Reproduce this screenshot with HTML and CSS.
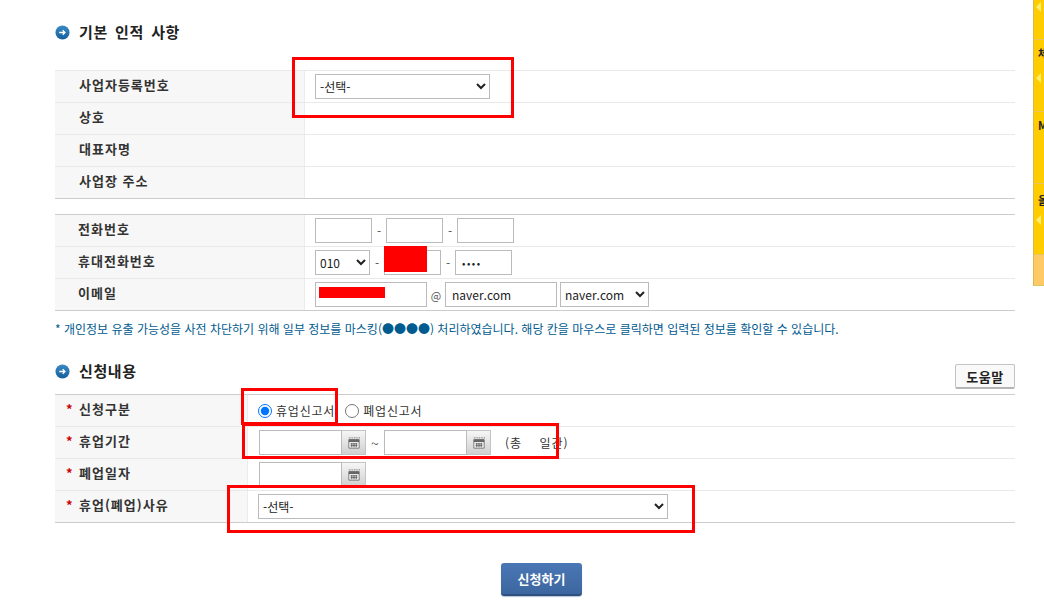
FILE: index.html
```html
<!DOCTYPE html>
<html lang="ko">
<head>
<meta charset="utf-8">
<title>휴폐업 신고</title>
<link rel="stylesheet" href="styles.css">
</head>
<body>
<main class="page">
  <h2 class="heading first">
    <svg class="bullet" viewBox="0 0 16 16"><defs><linearGradient id="b" x1="0" y1="0" x2="0" y2="1"><stop offset="0" stop-color="#3a8ac4"/><stop offset="1" stop-color="#15609c"/></linearGradient></defs><circle cx="8" cy="8" r="7.5" fill="url(#b)"/><path d="M4.5 8h6M8.2 5.6 10.6 8 8.2 10.4" fill="none" stroke="#fff" stroke-width="1.4"/></svg>
    기본 인적 사항
  </h2>

  <section class="table light-top wide">
    <div class="row"><div class="th">사업자등록번호</div><div class="td"><select class="sel sel-biz"><option>-선택-</option></select></div></div>
    <div class="row"><div class="th">상호</div><div class="td"></div></div>
    <div class="row"><div class="th">대표자명</div><div class="td"></div></div>
    <div class="row"><div class="th">사업장 주소</div><div class="td"></div></div>
  </section>

  <section class="table wide second">
    <div class="row"><div class="th">전화번호</div><div class="td">
      <input class="inp w57" type="text"><span class="dash">-</span><input class="inp w57" type="text"><span class="dash">-</span><input class="inp w57" type="text">
    </div></div>
    <div class="row"><div class="th">휴대전화번호</div><div class="td">
      <select class="sel w55"><option>010</option></select><span class="dash">-</span><input class="inp w57" type="text"><span class="dash">-</span><input class="inp w57 masked" type="password" value="1234">
    </div></div>
    <div class="row"><div class="th">이메일</div><div class="td">
      <input class="inp w112" type="text"><span class="at">@</span><input class="inp w112" type="text" value="naver.com"><select class="sel w89 ml3"><option>naver.com</option></select>
    </div></div>
  </section>

  <p class="notice">* 개인정보 유출 가능성을 사전 차단하기 위해 일부 정보를 마스킹(●●●●) 처리하였습니다. 해당 칸을 마우스로 클릭하면 입력된 정보를 확인할 수 있습니다.</p>

  <div class="head-row">
    <h2 class="heading">
      <svg class="bullet" viewBox="0 0 16 16"><circle cx="8" cy="8" r="7.5" fill="url(#b)"/><path d="M4.5 8h6M8.2 5.6 10.6 8 8.2 10.4" fill="none" stroke="#fff" stroke-width="1.4"/></svg>
      신청내용
    </h2>
    <button class="help" type="button">도움말</button>
  </div>

  <section class="table narrow">
    <div class="row"><div class="th"><span class="star">*</span>신청구분</div><div class="td radios">
      <label class="radio"><input type="radio" name="kind" checked>휴업신고서</label>
      <label class="radio"><input type="radio" name="kind">폐업신고서</label>
    </div></div>
    <div class="row"><div class="th"><span class="star">*</span>휴업기간</div><div class="td dates">
      <input class="inp date" type="text"><button class="cal" type="button"><svg viewBox="0 0 14 14"><path d="M1 1h1M3 1h1M5 1h1M7 1h1M9 1h1M11 1h1M13 1h1" stroke="#555" stroke-width="1"/><path d="M1 3h12v10H1z" fill="#fff" stroke="#666"/><path d="M1 3h12v3H1z" fill="#666"/><path d="M3 8h8M3 10h8M4 7v5M6 7v5M8 7v5M10 7v5" stroke="#666" stroke-width="1"/></svg></button>
      <span class="tilde">~</span>
      <input class="inp date" type="text"><button class="cal" type="button"><svg viewBox="0 0 14 14"><path d="M1 1h1M3 1h1M5 1h1M7 1h1M9 1h1M11 1h1M13 1h1" stroke="#555" stroke-width="1"/><path d="M1 3h12v10H1z" fill="#fff" stroke="#666"/><path d="M1 3h12v3H1z" fill="#666"/><path d="M3 8h8M3 10h8M4 7v5M6 7v5M8 7v5M10 7v5" stroke="#666" stroke-width="1"/></svg></button>
      <span class="total">(총&nbsp;&nbsp;&nbsp;&nbsp;일간)</span>
    </div></div>
    <div class="row"><div class="th"><span class="star">*</span>폐업일자</div><div class="td dates">
      <input class="inp date" type="text"><button class="cal" type="button"><svg viewBox="0 0 14 14"><path d="M1 1h1M3 1h1M5 1h1M7 1h1M9 1h1M11 1h1M13 1h1" stroke="#555" stroke-width="1"/><path d="M1 3h12v10H1z" fill="#fff" stroke="#666"/><path d="M1 3h12v3H1z" fill="#666"/><path d="M3 8h8M3 10h8M4 7v5M6 7v5M8 7v5M10 7v5" stroke="#666" stroke-width="1"/></svg></button>
    </div></div>
    <div class="row"><div class="th"><span class="star">*</span>휴업(폐업)사유</div><div class="td reason">
      <select class="sel sel-reason"><option>-선택-</option></select>
    </div></div>
  </section>

  <div class="actions"><button class="submit" type="button">신청하기</button></div>
</main>

<aside class="side">
  <div class="tab tab1"><i class="arrow"></i></div>
  <div class="tab tab2"><span>체</span><i class="arrow"></i></div>
  <div class="tab tab3"><span>M</span></div>
  <div class="tab tab4"><span>올</span><i class="arrow"></i></div>
  <div class="tab-end"></div>
</aside>

<div class="mark box1"></div>
<div class="mark box2"></div>
<div class="mark box3"></div>
<div class="mark box4"></div>
<div class="fill fill1"></div>
<div class="fill fill2"></div>
</body>
</html>
```
FILE: styles.css
```css
* { box-sizing: border-box; }
html, body { margin: 0; padding: 0; height: 610px; overflow: hidden; background: #fff; }
body { position: relative; font-family: "Noto Sans CJK KR", "Noto Sans", sans-serif; font-size: 12px; color: #333; }
.page { width: 960px; margin-left: 55px; padding-top: 20px; }

.heading { display: flex; align-items: center; gap: 9px; margin: 0; height: 24px; padding-bottom: 2px; font-size: 15px; font-weight: 700; color: #222; letter-spacing: 0.6px; }
.heading.first { margin-bottom: 26px; word-spacing: 2.5px; }
.bullet { width: 15px; height: 15px; flex: none; margin-top: 2px; }

.table { border-top: 1px solid #ccc; border-bottom: 0; }
.table.light-top { border-top-color: #e9e9e9; }
.table.second { margin-top: 15px; }
.row { display: flex; height: 32px; border-bottom: 1px solid #e9e9e9; }
.row:last-child { border-bottom-color: #ccc; }
.th { flex: none; display: flex; align-items: center; background: #f7f7f7; border-right: 1px solid #ececec; font-size: 13px; font-weight: 700; letter-spacing: 1px; color: #333; white-space: nowrap; }
.wide .th { width: 250px; padding-left: 24px; padding-bottom: 4px; }
.narrow .th { width: 193px; padding-left: 11px; padding-bottom: 4px; }
.second .th { padding-left: 23px; }
.td { flex: 1; display: flex; align-items: center; padding-left: 10px; min-width: 0; }
.star { width: 13px; color: #c00; font-weight: 700; }

.inp, .sel { height: 25px; border: 1px solid #bbb; border-radius: 0; background: #fff; font-family: inherit; font-size: 12px; color: #222; margin: 0; }
.inp { padding: 0 6px; }
.sel { padding: 0; }
.sel-biz { width: 175px; }
.sel-reason { width: 410px; }
.w57 { width: 57px; }
.w55 { width: 55px; }
.w112 { width: 112px; }
.w89 { width: 89px; }
.ml3 { margin-left: 3px; }
.masked { font-size: 10px; letter-spacing: 1.5px; }
.dash { width: 14px; text-align: center; color: #555; }
.at { width: 18px; text-align: center; font-size: 11px; color: #555; }

.notice { margin: 10px 0 0; height: 16px; line-height: 16px; font-size: 12px; color: #005b8f; white-space: nowrap; }

.head-row { display: flex; justify-content: space-between; margin-top: 27px; height: 25px; margin-bottom: 5px; }
.head-row .heading { margin-top: -5px; }
.help { width: 60px; height: 25px; padding: 0; border: 1px solid #c4c4c4; border-bottom: 2px solid #b5b5b5; border-radius: 2px; background: #f9f9f9; font-family: inherit; font-size: 13px; font-weight: 700; letter-spacing: 0.5px; color: #222; }

.radios { padding-left: 10px; gap: 10px; padding-top: 0; }
.radio { display: flex; align-items: center; gap: 4px; color: #333; letter-spacing: 0.8px; }
.radio input { width: 14px; height: 14px; margin: 0; accent-color: #0075ff; }
.dates { padding-left: 11px; }
.reason { padding-left: 10px; }
.date { width: 83px; }
.cal { display: flex; align-items: center; justify-content: center; width: 24px; height: 25px; padding: 0; border: 1px solid #c4c4c4; border-left: 0; background: linear-gradient(#f6f6f6, #d0d0d0); }
.cal svg { width: 12px; height: 12px; }
.tilde { width: 18px; text-align: center; font-size: 14px; color: #555; }
.total { margin-left: 14px; color: #333; font-size: 12px; letter-spacing: 1px; }

.actions { display: flex; justify-content: center; margin-top: 40px; padding-left: 13px; }
.submit { width: 81px; height: 33px; padding: 0; border: 0; border-bottom: 2px solid #2f4f80; border-radius: 3px; background: linear-gradient(#4a78b5, #3c669f); box-shadow: 0 1px 1px #b8c4d4; font-family: inherit; font-size: 13px; font-weight: 700; color: #fff; }

.side { position: absolute; left: 1033px; top: 0; width: 11px; height: 286px; display: flex; flex-direction: column; overflow: hidden; border-left: 1px solid #d8b84a; border-bottom: 1px solid #d8c860; background: #fc0; }
.tab { flex: none; border-bottom: 1px solid #e8c560; color: #222; font-weight: 700; font-size: 11px; white-space: nowrap; line-height: 14px; }
.tab span { display: block; padding-left: 4px; }
.tab1 { height: 40px; padding-top: 2px; }
.tab2 { height: 72px; padding-top: 6px; }
.tab3 { height: 72px; padding-top: 6px; }
.tab4 { height: 71px; padding-top: 9px; }
.tab2 .arrow { margin-top: 13px; }
.tab4 .arrow { margin-top: 8px; }
.arrow { display: block; width: 0; height: 0; margin-left: 2px; border: 5px solid transparent; border-left: 0; border-right: 5px solid #ffee70; }
.tab-end { flex: 1; background: #ffc966; }

.mark { position: absolute; border: 3px solid #f00; }
.box1 { left: 292px; top: 57px; width: 222px; height: 61px; }
.box2 { left: 241px; top: 388px; width: 97px; height: 37px; }
.box3 { left: 242px; top: 423px; width: 317px; height: 36px; }
.box4 { left: 227px; top: 485px; width: 468px; height: 48px; }
.fill { position: absolute; background: #f00; }
.fill1 { left: 384px; top: 246px; width: 43px; height: 26px; }
.fill2 { left: 319px; top: 287px; width: 66px; height: 11px; }
```
